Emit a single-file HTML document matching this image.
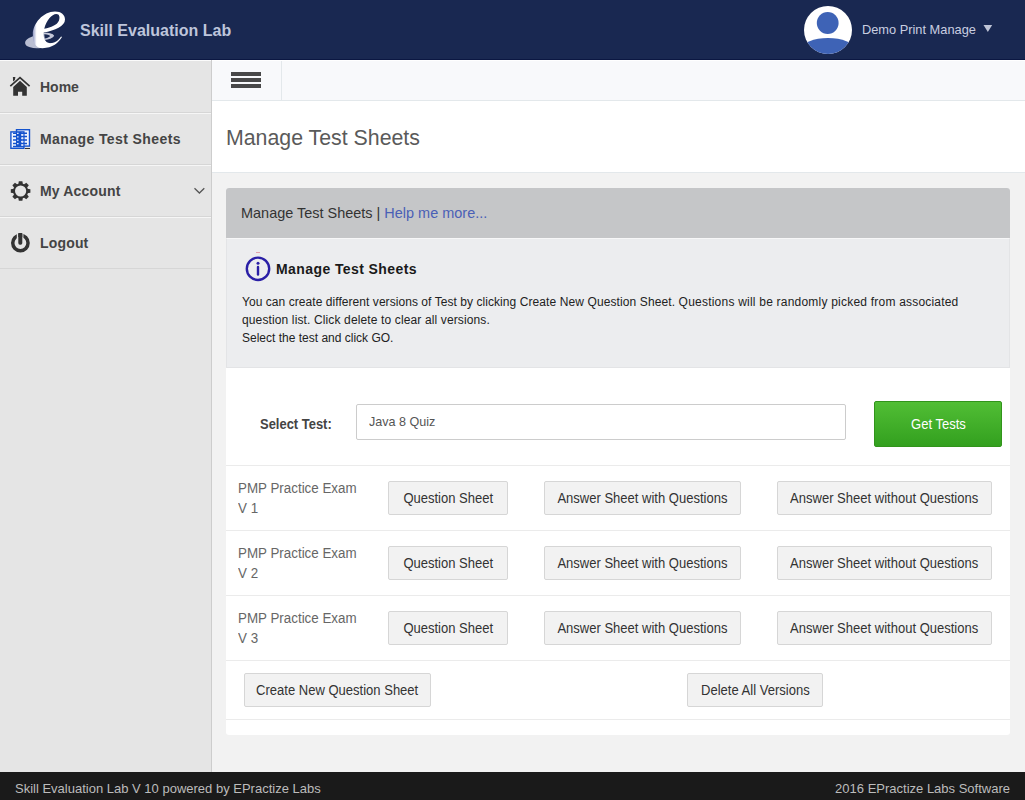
<!DOCTYPE html>
<html>
<head>
<meta charset="utf-8">
<title>Skill Evaluation Lab</title>
<style>
*{box-sizing:border-box;margin:0;padding:0}
html,body{width:1025px;height:800px;overflow:hidden}
body{font-family:"Liberation Sans",sans-serif;background:#f2f2f2;color:#333;position:relative;font-size:14px}
.sx{display:inline-block;white-space:nowrap;transform-origin:0 50%}
.cx{display:inline-block;white-space:nowrap;transform-origin:50% 50%}
#hdr{position:absolute;left:0;top:0;width:1025px;height:60px;background:#192851;border-bottom:1px solid #0b1742}
#logo{position:absolute;left:15px;top:5px}
#brand{position:absolute;left:80px;top:21px;font-size:16px;line-height:20px;font-weight:bold;color:#bec5db;white-space:nowrap}
#ava{position:absolute;left:804px;top:6px}
#user{position:absolute;left:862px;top:20px;font-size:13px;line-height:20px;color:#c9cee0;white-space:nowrap}
#caret{position:absolute;left:982px;top:24px}
#side{position:absolute;left:0;top:60px;width:212px;height:712px;background:#e5e5e5;border-right:1px solid #cdcdcd}
.it{position:relative;height:52px;border-top:1px solid #f6f6f6;border-bottom:1px solid #d6d6d6}
.it:first-child{height:53px;border-top-color:#fbfbfb}
.it .t{position:absolute;left:40px;top:15px;font-size:14px;line-height:20px;font-weight:bold;color:#444;white-space:nowrap}
.it:first-child .t{top:16px}
.it svg{position:absolute;left:5px;top:9px}
#tool{position:absolute;left:212px;top:60px;width:813px;height:41px;background:#f8f9fb;border-top:1px solid #fff;border-bottom:1px solid #e3e8eb}
#tool .sep{position:absolute;left:69px;top:0;width:1px;height:39px;background:#e3e8eb}
#tool i{position:absolute;left:19px;width:30px;height:4px;background:#484848}
#ttl{position:absolute;left:212px;top:101px;width:813px;height:72px;background:#fff;border-bottom:1px solid #e3e8eb}
#ttl h1{position:absolute;left:14px;top:22px;font-size:22.3px;line-height:30px;font-weight:normal;color:#5a5a5a;white-space:nowrap}
#panel{position:absolute;left:226px;top:188px;width:784px;height:547px;background:#fff;border-radius:3px}
#ph{position:absolute;left:0;top:0;width:784px;height:50px;background:#c5c6c8;border-radius:3px 3px 0 0}
#ph div{position:absolute;left:15px;top:15px;font-size:15px;line-height:20px;color:#333;white-space:nowrap}
#ph a{color:#4a60b6;text-decoration:none}
#info{position:absolute;left:0;top:50px;width:784px;height:130px;background:#ecedef;border:1px solid #e3e4e6;border-top-color:#f7f7f8}
#info svg{position:absolute;left:16px;top:12px}
#info h3{position:absolute;left:49px;top:20px;font-size:14px;line-height:20px;font-weight:bold;color:#1a1a1a;letter-spacing:.41px;white-space:nowrap}
#info p{position:absolute;left:15px;top:54px;font-size:12px;line-height:18px;color:#222;white-space:nowrap}
.lbl{position:absolute;left:34px;top:226px;font-size:14px;line-height:20px;font-weight:bold;color:#444;white-space:nowrap}
.inp{position:absolute;left:130px;top:216px;width:490px;height:36px;border:1px solid #ccc;border-radius:2px;background:#fff;font-size:13px;line-height:20px;color:#555;padding:7px 0 0 12px;white-space:nowrap}
.go{position:absolute;left:648px;top:213px;width:128px;height:46px;border:1px solid #31941b;border-radius:2px;background:linear-gradient(#51be35,#33a01f);color:#fff;font-size:14px;text-align:center;line-height:44px}
.row{position:absolute;left:0;width:784px;height:65px;border-top:1px solid #ebebeb}
.row .nm{position:absolute;left:12px;top:12px;font-size:14px;line-height:20px;color:#666;white-space:nowrap}
.btn{position:absolute;height:34px;border:1px solid #d6d6d6;border-radius:2px;background:#f2f2f2;font-size:14px;color:#333;text-align:center;line-height:32px;white-space:nowrap}
.btn .cx,.go .cx{transform:scaleX(.93)}
#foot{position:absolute;left:0;top:772px;width:1025px;height:28px;background:#1a1a1a;color:#bcbcbc;font-size:13px;line-height:20px;white-space:nowrap}
#foot .l{position:absolute;left:15px;top:7px}
#foot .r{position:absolute;right:15px;top:7px}
</style>
</head>
<body>
<div id="hdr">
  <svg id="logo" width="60" height="50" viewBox="0 0 960 800">
    <defs><linearGradient id="lg" x1="0" y1="0" x2="1" y2="0"><stop offset="0" stop-color="#8f98c4"/><stop offset=".12" stop-color="#fff"/></linearGradient></defs>
    <ellipse cx="400" cy="582" rx="240" ry="106" fill="#b9bed2" transform="rotate(-7 400 582)"/>
    <path d="M455 430 C450 520 480 615 560 615 C640 615 700 565 740 505 L700 440 L640 395 Z" fill="#192851"/>
    <path d="M452 446 C545 440 620 462 626 496 C600 532 540 552 470 558 Z" fill="#c3c7d8"/>
    <path d="M468 470 C520 468 560 486 562 500 C540 520 505 532 476 536 Z" fill="#192851"/>
    <path d="M752 512 C700 600 600 690 440 690 C330 690 285 600 285 470 C285 300 450 105 640 105 C740 105 800 160 800 230 C800 340 640 400 460 440 C450 520 480 610 560 610 C640 610 700 560 737 503 Z M468 378 C500 250 590 143 660 143 C715 143 722 200 702 250 C672 320 580 355 468 378 Z" fill="url(#lg)" fill-rule="evenodd"/>
  </svg>
  <div id="brand">Skill Evaluation Lab</div>
  <svg id="ava" width="48" height="48" viewBox="0 0 48 48">
    <defs><clipPath id="cc"><circle cx="24" cy="24" r="24"/></clipPath></defs>
    <circle cx="24" cy="24" r="24" fill="#fff"/>
    <circle cx="23.7" cy="17" r="10.9" fill="#3e63b6"/>
    <ellipse cx="24" cy="43.4" rx="26" ry="11.5" fill="#3e63b6" clip-path="url(#cc)"/>
  </svg>
  <div id="user"><span class="sx" style="transform:scaleX(.985)">Demo Print Manage</span></div>
  <svg id="caret" width="12" height="10" viewBox="0 0 12 10"><path d="M1.5 .9h8.7L5.85 8.1z" fill="#bfc4d6"/></svg>
</div>
<div id="side">
  <div class="it">
    <svg width="32" height="32" viewBox="0 0 32 32"><path d="M5.3 16.2 L15 7.6 L24.6 16.2" fill="none" stroke="#333" stroke-width="1.7"/><path d="M7.9 7h2.5l-.5 2.9L8.1 11.4z" fill="#333"/><path d="M15 10.8l6.8 6.2v8.8h-4.6v-4H13v4H8.2v-8.8z" fill="#333"/></svg>
    <span class="t">Home</span></div>
  <div class="it">
    <svg width="32" height="32" viewBox="0 0 32 32"><rect x="11.5" y="6.7" width="13" height="16.4" fill="#f1f4fd" stroke="#1453cd" stroke-width="1.4"/><rect x="5.9" y="8.9" width="13" height="16.4" fill="#f1f4fd" stroke="#1453cd" stroke-width="1.4"/><rect x="11" y="9" width="5.5" height="14.6" fill="#1453cd"/><path d="M8 10.2h14M8 13.6h14M8 17h14M8 20.4h14M8 23.4h11" stroke="#1453cd" stroke-width="1.5"/><path d="M12 10.4h1.6M12 13.8h1.6M12 17.2h1.6M12 20.6h1.6M16 11.8h2.4M16 15.2h2.4M16 18.6h2.4M16 22h2.4" stroke="#dbe4fb" stroke-width="1.15"/><rect x="20" y="25" width="5" height=".9" fill="#222"/></svg>
    <span class="t" style="letter-spacing:.41px">Manage Test Sheets</span></div>
  <div class="it">
    <svg width="32" height="32" viewBox="0 0 32 32"><g transform="translate(15.6 16)"><circle r="6.6" fill="none" stroke="#333" stroke-width="2"/><g fill="#333"><path d="M-1.8 -9.8h3.6l.5 3.4h-4.6z" transform="rotate(0)"/><path d="M-1.8 -9.8h3.6l.5 3.4h-4.6z" transform="rotate(45)"/><path d="M-1.8 -9.8h3.6l.5 3.4h-4.6z" transform="rotate(90)"/><path d="M-1.8 -9.8h3.6l.5 3.4h-4.6z" transform="rotate(135)"/><path d="M-1.8 -9.8h3.6l.5 3.4h-4.6z" transform="rotate(180)"/><path d="M-1.8 -9.8h3.6l.5 3.4h-4.6z" transform="rotate(225)"/><path d="M-1.8 -9.8h3.6l.5 3.4h-4.6z" transform="rotate(270)"/><path d="M-1.8 -9.8h3.6l.5 3.4h-4.6z" transform="rotate(315)"/></g></g></svg>
    <span class="t" style="letter-spacing:.17px">My Account</span>
    <svg style="left:193px;top:20px" width="14" height="10" viewBox="0 0 14 10"><path d="M1.5 2.2L6.4 7L11.3 2.2" fill="none" stroke="#555" stroke-width="1.3"/></svg></div>
  <div class="it">
    <svg width="32" height="32" viewBox="0 0 32 32"><defs><clipPath id="pc"><path d="M0 0h11.8v32H0zM18.4 0H32v32H18.4zM11.8 14h6.6v18h-6.6z"/></clipPath></defs><circle cx="15.4" cy="16" r="7.65" fill="none" stroke="#333" stroke-width="3.5" clip-path="url(#pc)"/><rect x="13.3" y="6" width="4" height="11.7" rx="1.6" fill="#333"/><rect x="13.3" y="6" width="4" height="4" fill="#333"/></svg>
    <span class="t" style="letter-spacing:.17px">Logout</span></div>
</div>
<div id="tool"><i style="top:11px"></i><i style="top:17px"></i><i style="top:23px"></i><div class="sep"></div></div>
<div id="ttl"><h1><span class="sx" style="transform:scaleX(.956)">Manage Test Sheets</span></h1></div>
<div id="panel">
  <div id="ph"><div><span class="sx" style="transform:scaleX(.964)">Manage Test Sheets | <a>Help me more...</a></span></div></div>
  <div id="info">
    <svg width="30" height="32" viewBox="0 0 30 32"><circle cx="15" cy="17.8" r="11.2" fill="none" stroke="#2a1fa6" stroke-width="2.4"/><circle cx="15" cy="12.3" r="1.5" fill="#2a1fa6"/><rect x="13.8" y="14.8" width="2.4" height="10" rx="1.2" fill="#2a1fa6"/><rect x="13" y="1" width="4" height="1" fill="#e3a3ad"/></svg>
    <h3>Manage Test Sheets</h3>
    <p><span style="letter-spacing:.056px">You can create different versions of Test by clicking </span><span style="letter-spacing:.107px">Create New Question Sheet. </span><span style="letter-spacing:.218px">Questions will be randomly picked from </span><span style="letter-spacing:.19px">associated</span><br><span style="letter-spacing:.13px">question list. Click delete to clear all versions.</span><br>Select the test and click GO.</p>
  </div>
  <div class="lbl"><span class="sx" style="transform:scaleX(.925)">Select Test:</span></div>
  <div class="inp"><span class="sx" style="transform:scaleX(.967)">Java 8 Quiz</span></div>
  <div class="go"><span class="cx">Get Tests</span></div>
  <div class="row" style="top:277px"><div class="nm"><span class="sx" style="transform:scaleX(.955)">PMP Practice Exam<br>V 1</span></div>
    <div class="btn" style="left:162px;top:15px;width:120px"><span class="cx">Question Sheet</span></div>
    <div class="btn" style="left:318px;top:15px;width:197px"><span class="cx">Answer Sheet with Questions</span></div>
    <div class="btn" style="left:551px;top:15px;width:215px"><span class="cx">Answer Sheet without Questions</span></div></div>
  <div class="row" style="top:342px"><div class="nm"><span class="sx" style="transform:scaleX(.955)">PMP Practice Exam<br>V 2</span></div>
    <div class="btn" style="left:162px;top:15px;width:120px"><span class="cx">Question Sheet</span></div>
    <div class="btn" style="left:318px;top:15px;width:197px"><span class="cx">Answer Sheet with Questions</span></div>
    <div class="btn" style="left:551px;top:15px;width:215px"><span class="cx">Answer Sheet without Questions</span></div></div>
  <div class="row" style="top:407px"><div class="nm"><span class="sx" style="transform:scaleX(.955)">PMP Practice Exam<br>V 3</span></div>
    <div class="btn" style="left:162px;top:15px;width:120px"><span class="cx">Question Sheet</span></div>
    <div class="btn" style="left:318px;top:15px;width:197px"><span class="cx">Answer Sheet with Questions</span></div>
    <div class="btn" style="left:551px;top:15px;width:215px"><span class="cx">Answer Sheet without Questions</span></div></div>
  <div class="row" style="top:472px;height:60px;border-bottom:1px solid #ebebeb">
    <div class="btn" style="left:18px;top:12px;width:187px"><span class="cx">Create New Question Sheet</span></div>
    <div class="btn" style="left:461px;top:12px;width:136px"><span class="cx">Delete All Versions</span></div></div>
</div>
<div id="foot"><div class="l">Skill Evaluation Lab V 10 powered by EPractize Labs</div><div class="r">2016 EPractize Labs Software</div></div>
</body>
</html>
